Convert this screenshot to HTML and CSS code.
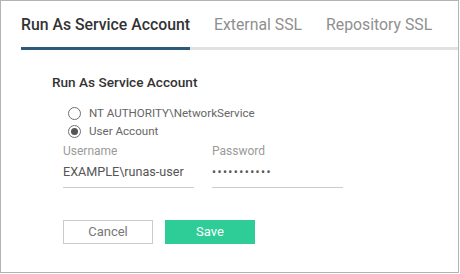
FILE: index.html
```html
<!DOCTYPE html>
<html>
<head>
<meta charset="utf-8">
<link rel="stylesheet" href="styles.css">
</head>
<body>
<div class="frame">
  <div class="tabs">
    <div class="tab active">Run As Service Account</div>
    <div class="tab">External SSL</div>
    <div class="tab">Repository SSL</div>
  </div>
  <div class="content">
    <div class="heading">Run As Service Account</div>
    <div class="radios">
      <div class="radio-row"><span class="radio"></span><span class="radio-label">NT AUTHORITY\NetworkService</span></div>
      <div class="radio-row"><span class="radio checked"></span><span class="radio-label">User Account</span></div>
    </div>
    <div class="fields">
      <div class="field">
        <div class="field-label">Username</div>
        <div class="field-value">EXAMPLE\runas-user</div>
      </div>
      <div class="field">
        <div class="field-label">Password</div>
        <div class="field-value dots">•••••••••••</div>
      </div>
    </div>
    <div class="buttons">
      <div class="btn cancel">Cancel</div>
      <div class="btn save">Save</div>
    </div>
  </div>
</div>
</body>
</html>
```
FILE: styles.css
```css
* { box-sizing: border-box; }
html, body { margin: 0; padding: 0; background: #fff; }
body { font-family: Roboto, "Liberation Sans", sans-serif; }
.frame {
  width: 459px;
  height: 273px;
  border: 1px solid #b3b3b3;
  background: #fff;
}
.tabs {
  display: flex;
  gap: 24px;
  margin-left: 20px;
  padding-top: 14px;
  border-bottom: 3px solid #e1e1e1;
}
.tab {
  font-size: 15.8px;
  line-height: 20px;
  padding-bottom: 12px;
  color: #8f8f8f;
  margin-bottom: -3px;
  border-bottom: 3px solid transparent;
}
.tab.active {
  color: #333;
  font-weight: 500;
  border-bottom-color: #2e5a78;
}
.content { padding-left: 51px; }
.heading {
  margin-top: 23px;
  font-size: 13.6px;
  line-height: 18px;
  font-weight: 500;
  color: #333;
}
.radios { margin-top: 13px; margin-left: 16px; }
.radio-row {
  display: flex;
  align-items: center;
  height: 18px;
  gap: 8px;
}
.radio {
  width: 13px;
  height: 13px;
  border: 1px solid #707070;
  border-radius: 50%;
  display: flex;
  align-items: center;
  justify-content: center;
}
.radio.checked::after {
  content: "";
  width: 7px;
  height: 7px;
  border-radius: 50%;
  background: #555;
}
.radio-label { font-size: 11.6px; color: #666; }
.fields {
  display: flex;
  gap: 18px;
  margin-left: 11px;
  margin-top: 3px;
}
.field { width: 131px; border-bottom: 1px solid #cccccc; padding-bottom: 7px; }
.field-label { font-size: 12px; line-height: 16px; color: #9a9a9a; }
.field-value { margin-top: 5px; font-size: 12.6px; line-height: 16px; color: #555; }
.dots { font-size: 12px; letter-spacing: 1.4px; }
.buttons {
  display: flex;
  gap: 12px;
  margin-left: 11px;
  margin-top: 32px;
}
.btn {
  width: 90px;
  height: 24px;
  line-height: 22px;
  text-align: center;
  font-size: 13px;
}
.cancel { border: 1px solid #cccccc; color: #777; }
.save { background: #2ecc96; color: #fff; border: 1px solid #2ecc96; }
```
